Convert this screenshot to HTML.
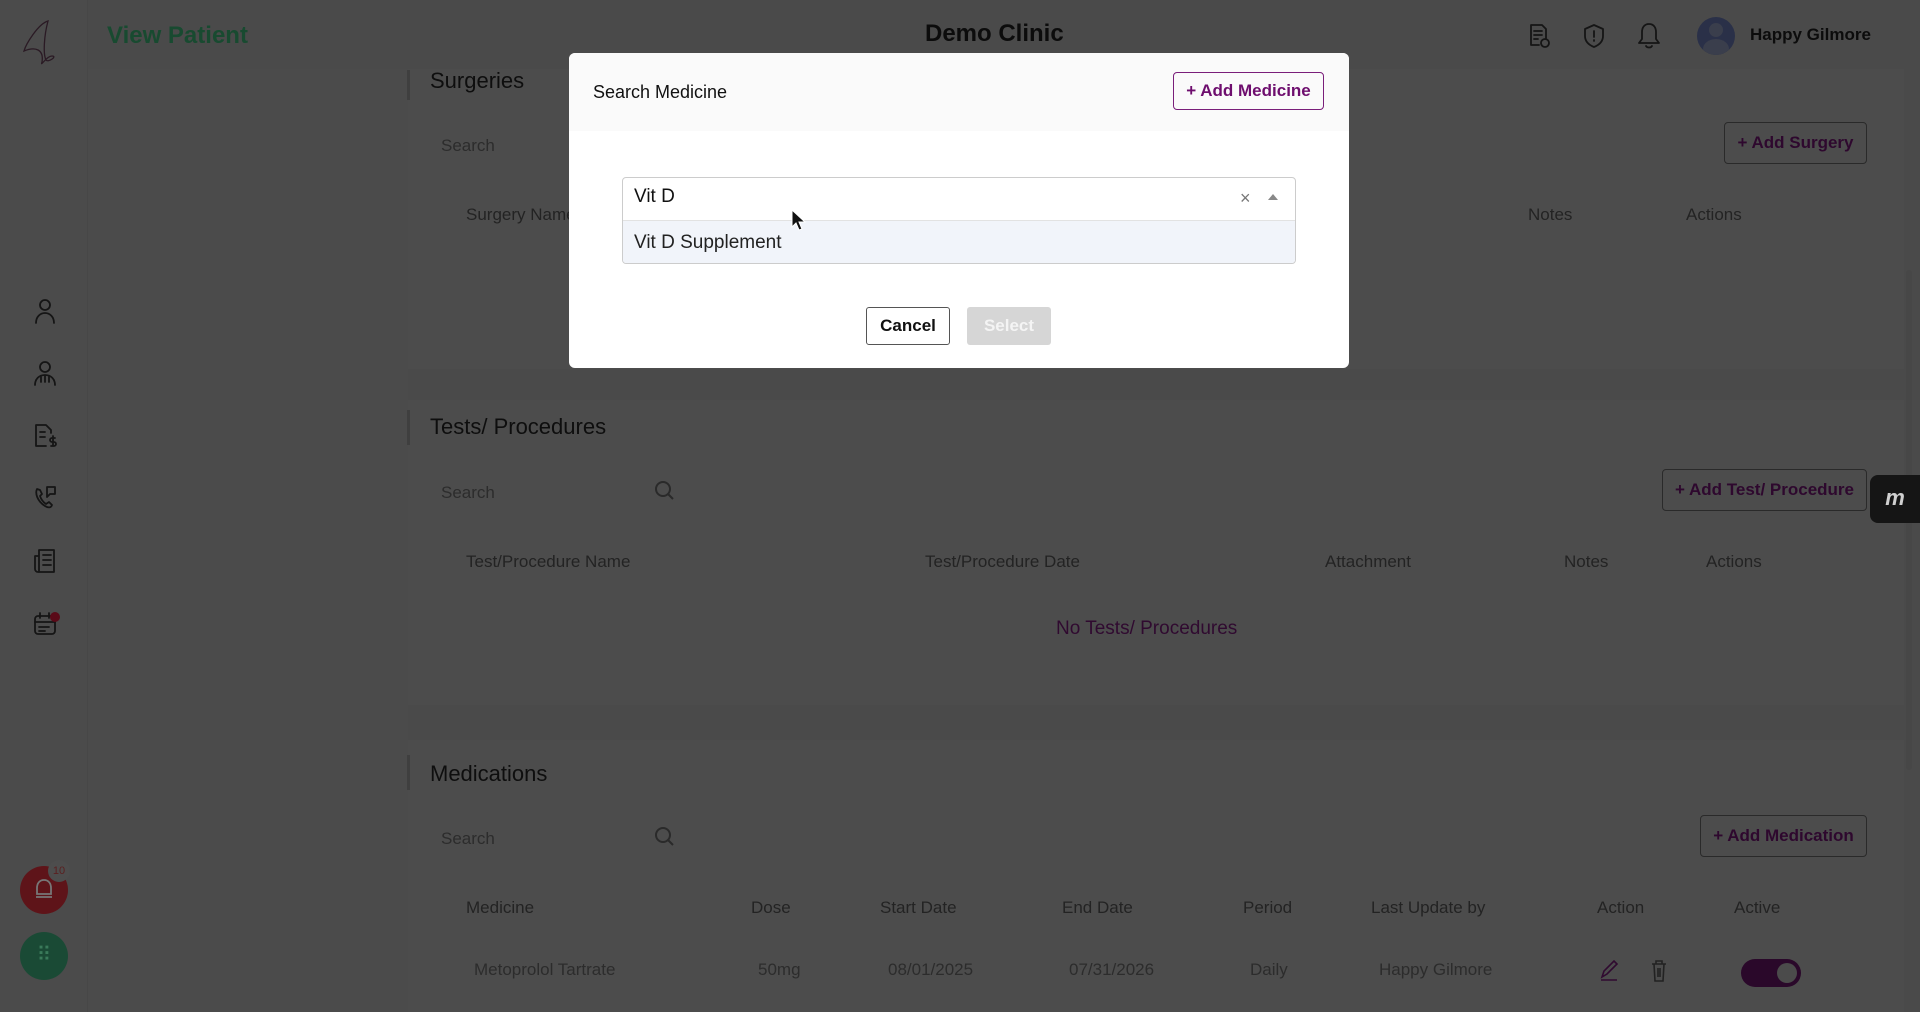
<!DOCTYPE html>
<html><head><meta charset="utf-8"><style>
*{box-sizing:border-box;margin:0;padding:0}
body{width:1920px;height:1012px;overflow:hidden;background:#4a4a4a;font-family:"Liberation Sans",Arial,sans-serif;position:relative}
.a{position:absolute;white-space:nowrap}
.side{left:0;top:0;width:88px;height:1012px;background:#4b4b4b;border-right:1px solid #474747}
.panel{background:#4c4c4c}
.t{color:#0e0e0e;font-size:22px}
.h{color:#232323;font-size:17px}
.g{color:#2c2c2c;font-size:17px}
.btn{border:1px solid #2a2a2a;border-radius:4px;color:#2e082e;font-weight:bold;font-size:17px;display:flex;align-items:center;justify-content:center}
.ic{stroke:#151515;fill:none;stroke-width:1.8;stroke-linecap:round;stroke-linejoin:round}
</style></head><body>
<div class="a side"></div>
<div class="a" style="left:88px;top:69px;width:320px;height:943px;background:#4b4b4b"></div>
<div class="a panel" style="left:408px;top:69px;width:1496px;height:300px"></div>
<div class="a panel" style="left:408px;top:400px;width:1496px;height:305px"></div>
<div class="a panel" style="left:408px;top:740px;width:1496px;height:272px"></div>
<div class="a" style="left:1906px;top:270px;width:6px;height:500px;background:#474747;border-radius:3px"></div>
<div class="a" style="left:407px;top:70px;width:3px;height:30px;background:#3f3f3f"></div>
<div class="a" style="left:407px;top:410px;width:3px;height:35px;background:#3f3f3f"></div>
<div class="a" style="left:407px;top:755px;width:3px;height:35px;background:#3f3f3f"></div>

<!-- header -->
<svg class="a" style="left:18px;top:16px" width="52" height="54"><path d="M30 5 C20 8 8 28 6 35 C18 30 26 34 24 46 C22 52 28 40 34 40 C40 40 30 47 28 44 C25 38 26 20 30 5Z" fill="none" stroke="#2a1a24" stroke-width="1.3"/></svg>
<div class="a" style="left:107px;top:22px;font-size:24px;font-weight:bold;color:#184a30">View Patient</div>
<div class="a" style="left:925px;top:20px;font-size:24px;font-weight:bold;color:#0c0c0c">Demo Clinic</div>
<svg class="a ic" style="left:1526px;top:22px" width="26" height="28"><path d="M5 3h11l4 4v9M5 3v20h8M8 9h8M8 13h8M8 17h4"/><circle cx="19" cy="21" r="4"/></svg>
<svg class="a ic" style="left:1582px;top:22px" width="24" height="28"><path d="M12 3l9 4v7c0 6-4 9-9 11-5-2-9-5-9-11V7z M12 9v6M12 18v1"/></svg>
<svg class="a ic" style="left:1636px;top:21px" width="26" height="30"><path d="M13 3c-5 0-7 4-7 8v7l-3 4h20l-3-4v-7c0-4-2-8-7-8z M10 25c1 2 5 2 6 0"/></svg>
<div class="a" style="left:1697px;top:17px;width:38px;height:38px;border-radius:50%;background:#2a3048;overflow:hidden"><div class="a" style="left:12px;top:6px;width:14px;height:14px;border-radius:50%;background:#3a3e4c"></div><div class="a" style="left:6px;top:22px;width:26px;height:20px;border-radius:50%;background:#3a3e4c"></div></div>
<div class="a" style="left:1750px;top:25px;font-size:17px;font-weight:bold;color:#0c0c0c">Happy Gilmore</div>

<!-- sidebar icons -->
<svg class="a ic" style="left:32px;top:298px" width="26" height="28"><circle cx="13" cy="7" r="5"/><path d="M4 25c0-6 4-10 9-10s9 4 9 10"/></svg>
<svg class="a ic" style="left:32px;top:360px" width="26" height="28"><circle cx="13" cy="7" r="5"/><path d="M3 25c0-6 4-10 10-10s10 4 10 10M9 16v6M17 16v6M13 16v6"/></svg>
<svg class="a ic" style="left:32px;top:422px" width="26" height="28"><path d="M4 3h10l5 5v3M4 3v21h10M8 10h5M8 15h5"/><path d="M21 14v10M23 16h-3a2 2 0 000 4h2a2 2 0 010 4h-3"/></svg>
<svg class="a ic" style="left:32px;top:484px" width="26" height="28"><path d="M5 5c-2 4 0 12 8 17 3 2 6 2 7-1l-3-3-3 2c-3-2-5-5-6-8l2-2-2-4z"/><path d="M15 3h8v7h-5l-3 3z"/></svg>
<svg class="a ic" style="left:32px;top:547px" width="26" height="28"><path d="M7 3h15v22H6a3 3 0 01-3-3V9h4M7 3v22M11 8h8M11 13h8M11 18h8"/></svg>
<svg class="a ic" style="left:32px;top:610px" width="26" height="28"><rect x="3" y="6" width="20" height="18" rx="3"/><path d="M3 12h20M8 3v5M17 3v5M7 17h10M7 21h6"/></svg>
<div class="a" style="left:50px;top:612px;width:10px;height:10px;border-radius:50%;background:#5a0a18"></div>
<div class="a" style="left:20px;top:866px;width:48px;height:48px;border-radius:50%;background:#5e1419"></div>
<svg class="a" style="left:32px;top:876px" width="24" height="28" fill="none" stroke="#777" stroke-width="1.8"><path d="M12 4c-5 0-7 4-7 8v6h14v-6c0-4-2-8-7-8zM4 21h16"/></svg>
<div class="a" style="left:48px;top:860px;width:22px;height:22px;border-radius:50%;background:#4d4d4d;color:#5a2020;font-size:11px;text-align:center;line-height:22px">10</div>
<div class="a" style="left:20px;top:932px;width:48px;height:48px;border-radius:50%;background:#1a4a35;color:#3a7a5a;font-size:20px;text-align:center;line-height:46px">⠿</div>

<!-- surgeries -->
<div class="a t" style="left:430px;top:68px">Surgeries</div>
<div class="a g" style="left:441px;top:136px">Search</div>
<div class="a btn" style="left:1724px;top:122px;width:143px;height:42px">+ Add Surgery</div>
<div class="a h" style="left:466px;top:205px">Surgery Name</div>
<div class="a h" style="left:1528px;top:205px">Notes</div>
<div class="a h" style="left:1686px;top:205px">Actions</div>

<!-- tests -->
<div class="a t" style="left:430px;top:414px">Tests/ Procedures</div>
<div class="a g" style="left:441px;top:483px">Search</div>
<svg class="a" style="left:653px;top:479px" width="24" height="24" fill="none" stroke="#2a2a2a" stroke-width="2"><circle cx="10" cy="10" r="7"/><path d="M15 15l5 5"/></svg>
<div class="a btn" style="left:1662px;top:469px;width:205px;height:42px">+ Add Test/ Procedure</div>
<div class="a" style="left:1870px;top:475px;width:50px;height:48px;background:#151515;border-radius:8px 0 0 8px;color:#d0d0d0;font-weight:bold;font-style:italic;font-size:22px;text-align:center;line-height:46px">m</div>
<div class="a h" style="left:466px;top:552px">Test/Procedure Name</div>
<div class="a h" style="left:925px;top:552px">Test/Procedure Date</div>
<div class="a h" style="left:1325px;top:552px">Attachment</div>
<div class="a h" style="left:1564px;top:552px">Notes</div>
<div class="a h" style="left:1706px;top:552px">Actions</div>
<div class="a" style="left:1056px;top:618px;font-size:19px;color:#300a30">No Tests/ Procedures</div>

<!-- medications -->
<div class="a t" style="left:430px;top:761px">Medications</div>
<div class="a g" style="left:441px;top:829px">Search</div>
<svg class="a" style="left:653px;top:825px" width="24" height="24" fill="none" stroke="#2a2a2a" stroke-width="2"><circle cx="10" cy="10" r="7"/><path d="M15 15l5 5"/></svg>
<div class="a btn" style="left:1700px;top:815px;width:167px;height:42px">+ Add Medication</div>
<div class="a h" style="left:466px;top:898px">Medicine</div>
<div class="a h" style="left:751px;top:898px">Dose</div>
<div class="a h" style="left:880px;top:898px">Start Date</div>
<div class="a h" style="left:1062px;top:898px">End Date</div>
<div class="a h" style="left:1243px;top:898px">Period</div>
<div class="a h" style="left:1371px;top:898px">Last Update by</div>
<div class="a h" style="left:1597px;top:898px">Action</div>
<div class="a h" style="left:1734px;top:898px">Active</div>
<div class="a g" style="left:474px;top:960px">Metoprolol Tartrate</div>
<div class="a g" style="left:758px;top:960px">50mg</div>
<div class="a g" style="left:888px;top:960px">08/01/2025</div>
<div class="a g" style="left:1069px;top:960px">07/31/2026</div>
<div class="a g" style="left:1250px;top:960px">Daily</div>
<div class="a g" style="left:1379px;top:960px">Happy Gilmore</div>
<svg class="a" style="left:1598px;top:958px" width="22" height="24" fill="none" stroke="#300a30" stroke-width="1.6"><path d="M4 19l2-6 10-10 3 3-10 10-5 3zM3 22h16"/></svg>
<svg class="a" style="left:1649px;top:959px" width="20" height="24" fill="none" stroke="#222" stroke-width="1.6"><path d="M3 5h14M7 5V2h6v3M5 5l1 17h8l1-17M9 9v9M11 9v9"/></svg>
<div class="a" style="left:1741px;top:959px;width:60px;height:28px;border-radius:14px;background:#2a082a"><div class="a" style="left:36px;top:4px;width:20px;height:20px;border-radius:50%;background:#4b4b4b"></div></div>

<!-- modal -->
<div class="a" style="left:569px;top:53px;width:780px;height:315px;background:#fff;border-radius:6px;overflow:hidden">
 <div class="a" style="left:0;top:0;width:780px;height:78px;background:#fafafa"></div>
 <div class="a" style="left:24px;top:29px;font-size:18px;color:#111">Search Medicine</div>
 <div class="a" style="left:604px;top:19px;width:151px;height:38px;border:1px solid #7a1e7a;border-radius:4px;color:#6e0e6e;font-weight:bold;font-size:17px;text-align:center;line-height:36px">+ Add Medicine</div>
 <div class="a" style="left:53px;top:124px;width:674px;height:87px;border:1px solid #ccc;border-radius:4px;overflow:hidden">
  <div class="a" style="left:0;top:42px;width:674px;height:45px;background:#f1f4fa;border-top:1px solid #e2e2e2"></div>
  <div class="a" style="left:11px;top:8px;font-size:19px;color:#111">Vit D</div>
  <div class="a" style="left:11px;top:54px;font-size:19px;color:#222">Vit D Supplement</div>
  <div class="a" style="left:617px;top:10px;font-size:18px;color:#777">×</div>
  <div class="a" style="left:645px;top:16px;width:0;height:0;border-left:5px solid transparent;border-right:5px solid transparent;border-bottom:6px solid #888"></div>
 </div>
 <svg class="a" style="left:222px;top:156px" width="16" height="24"><path d="M1 1v17l4-4 3 7 3-1-3-7h6z" fill="#111" stroke="#fff" stroke-width="1"/></svg>
 <div class="a" style="left:297px;top:254px;width:84px;height:38px;border:1px solid #555;border-radius:3px;font-weight:bold;font-size:17px;color:#111;text-align:center;line-height:36px">Cancel</div>
 <div class="a" style="left:398px;top:254px;width:84px;height:38px;background:#d6d6d6;border-radius:3px;font-weight:bold;font-size:17px;color:#f4f4f4;text-align:center;line-height:38px">Select</div>
</div>
</body></html>
